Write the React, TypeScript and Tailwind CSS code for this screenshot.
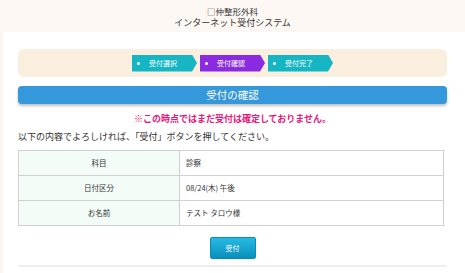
import React from 'react';

const font = { fontFamily: '"Noto Sans CJK JP", "Noto Sans", sans-serif' };

const steps = [
  { label: '受付選択', active: false },
  { label: '受付確認', active: true },
  { label: '受付完了', active: false },
];

const rows = [
  { label: '科目', value: '診察' },
  { label: '日付区分', value: '08/24(木) 午後' },
  { label: 'お名前', value: 'テスト タロウ様' },
];

const App = () => {
  return (
    <div className="w-[465px] h-[273px] overflow-hidden bg-[#fdf6f0] text-[#333]" style={font}>
      {/* Header */}
      <div className="h-[32px] bg-[#fdf8f3] flex flex-col items-center justify-center leading-none">
        <p className="text-[8.5px] text-[#333] mt-[2px]">□仲整形外科</p>
        <p className="text-[9px] text-[#333] mt-[3px]">インターネット受付システム</p>
      </div>

      {/* Main */}
      <div className="ml-[3px] bg-white h-[241px] pl-[15px] pr-[18px] pt-[17px]">
        {/* Steps */}
        <div className="h-[28px] bg-[#faefdf] rounded-[6px] flex items-center justify-center gap-[3px]">
          {steps.map((s) => (
            <div
              key={s.label}
              className={`h-[17px] w-[65px] flex items-center text-white text-[7px] pl-[5px] [clip-path:polygon(0_0,60px_0,65px_50%,60px_100%,0_100%)] ${
                s.active ? 'bg-[#8a2be2]' : 'bg-[#16b5c3]'
              }`}
            >
              <span className="w-[3px] h-[3px] rounded-full bg-white" />
              <span className="ml-[9px]">{s.label}</span>
            </div>
          ))}
        </div>

        {/* Title bar */}
        <div className="mt-[9px] h-[18px] bg-[#3498db] rounded-[4px] shadow-[0_2px_3px_rgba(0,0,0,0.25)] flex items-center justify-center">
          <span className="text-white text-[10.5px]">受付の確認</span>
        </div>

        <p className="mt-[8px] text-center text-[9px] font-bold text-[#e5177b] leading-[14px]">
          ※この時点ではまだ受付は確定しておりません。
        </p>
        <p className="mt-[4px] text-[9px] text-[#333] leading-[14px]">
          以下の内容でよろしければ、「受付」ボタンを押してください。
        </p>

        {/* Table */}
        <table className="mt-[6px] w-[426px] border-collapse text-[7.5px] text-[#333]">
          <tbody>
            {rows.map((r) => (
              <tr key={r.label} className="h-[25px]">
                <td className="w-[161px] border border-[#d0d0d0] bg-[#f3fcf7] text-center">{r.label}</td>
                <td className="border border-[#d0d0d0] pl-[6px]">{r.value}</td>
              </tr>
            ))}
          </tbody>
        </table>

        {/* Button */}
        <div className="flex justify-center mt-[11px]">
          <button className="w-[46px] h-[22px] rounded-[2px] border border-[#0b8cb8] bg-gradient-to-b from-[#26bbe4] to-[#0a8fbd] text-white text-[7px]">
            受付
          </button>
        </div>

        <div className="mt-[6px] h-[2px] bg-[#eeeeee]" />
      </div>
    </div>
  );
};

export default App;
